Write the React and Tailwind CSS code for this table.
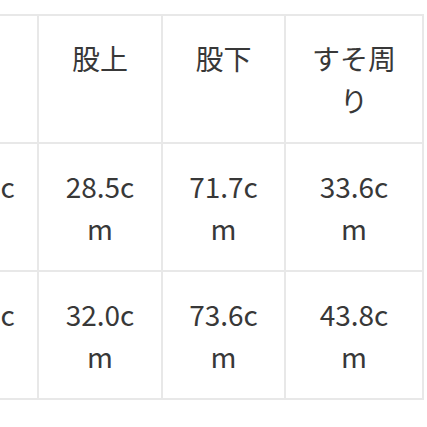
const header = ["", "股上", "股下", "すそ周り"];

const rows = [
	["30.5cm", "28.5cm", "71.7cm", "33.6cm"],
	["34.0cm", "32.0cm", "73.6cm", "43.8cm"],
];

const Cell = ({ children, last }) => (
	<div className={`bg-white py-[21px] text-center break-all leading-[42px] ${last ? "px-6" : "px-5"}`}>
		{children}
	</div>
);

export default function App() {
	return (
		<div
			className="w-[427px] h-[427px] overflow-hidden bg-white text-[28px] text-[#383838]"
			style={{ fontFamily: '"Noto Sans CJK JP", "Noto Sans", sans-serif' }}
		>
			<div className="mt-[14px] -ml-[78px] w-[502px] grid grid-cols-[113px_122px_121px_136px] gap-[2px] p-[2px] bg-[#e8e8e8]">
				{header.map((h, i) => (
					<Cell key={"h" + i} last={i === 3}>
						{h || "\u00a0"}
					</Cell>
				))}
				{rows.map((r, ri) =>
					r.map((v, ci) => (
						<Cell key={ri + "-" + ci} last={ci === 3}>
							{v}
						</Cell>
					))
				)}
			</div>
		</div>
	);
}
